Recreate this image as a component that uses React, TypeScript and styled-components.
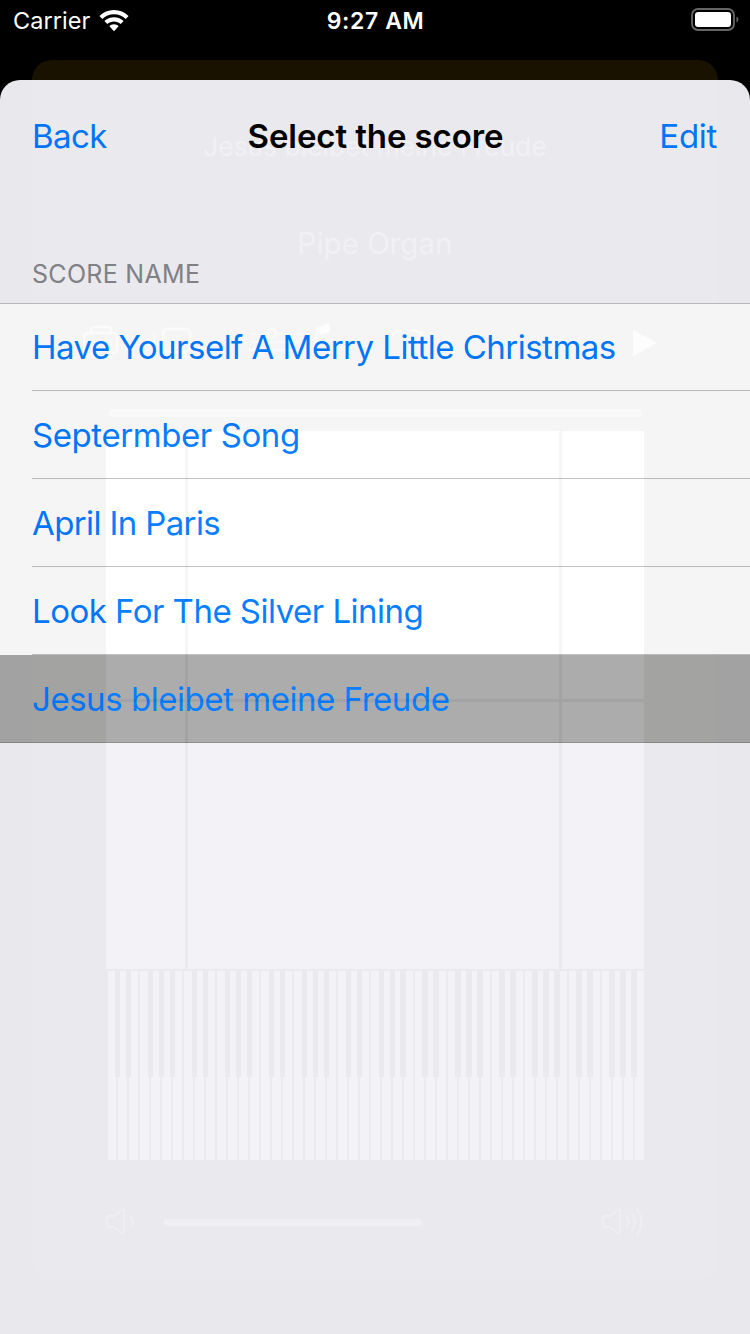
import React from "react";
import styled, { createGlobalStyle } from "styled-components";

const GlobalStyle = createGlobalStyle`
  * { box-sizing: border-box; }
  body {
    margin: 0;
    background: #000;
    font-family: Inter, "Liberation Sans", sans-serif;
  }
`;

const Screen = styled.div`
  position: relative;
  width: 750px;
  height: 1334px;
  overflow: hidden;
  background: #000;
  display: flex;
  flex-direction: column;
`;

const StatusBar = styled.header`
  height: 42px;
  flex: none;
  display: grid;
  grid-template-columns: 1fr auto 1fr;
  align-items: center;
  padding: 0 11px 0 13px;
  color: #fff;
  font-size: 23.5px;
  line-height: 42px;
`;

const Carrier = styled.div`
  display: flex;
  align-items: center;
  gap: 9px;
  letter-spacing: 0.05px;
`;

const Clock = styled.div`
  font-weight: 600;
  font-size: 23px;
  letter-spacing: 0.6px;
  margin-left: -1px;
`;

const BatterySlot = styled.div`
  display: flex;
  justify-content: flex-end;
  padding-bottom: 2px;
`;

/* Player card that stays visible through the sheet */
const Player = styled.section`
  isolation: isolate;
  width: 686px;
  height: 1221px;
  flex: none;
  margin: 18px auto 0;
  padding: 67px 74px 0;
  border-radius: 20px;
  background: #191200;
  color: #fff;
  display: flex;
  flex-direction: column;
`;

const PlayerTitle = styled.div<{ $gap: number; $size: number; $track: number }>`
  margin-top: ${(p) => p.$gap}px;
  height: 40px;
  line-height: 40px;
  text-align: center;
  white-space: nowrap;
  font-size: ${(p) => p.$size}px;
  letter-spacing: ${(p) => p.$track}px;
  opacity: 0.75;
`;

const Toolbar = styled.div`
  margin: 56px -23px 0;
  height: 48px;
  flex: none;
`;

const Progress = styled.div`
  margin: 42px 2px 0 3px;
  height: 8px;
  flex: none;
  border-radius: 4px;
  background: rgba(255, 255, 255, 0.45);
`;

const Roll = styled.div`
  margin-top: 14px;
  height: 538px;
  flex: none;
  display: grid;
  grid-template-columns: 78.5px 371px 82.5px;
  grid-template-rows: 268px 267px;
  gap: 3px;
  background: #2a1a22;
`;

const RollCell = styled.div`
  background: #fff;
`;

const Keyboard = styled.div`
  margin-top: 2px;
  padding-left: 1.5px;
  height: 189px;
  flex: none;
  display: flex;
`;

const Key = styled.div<{ $sharp: boolean }>`
  flex: 1;
  display: flex;
  justify-content: flex-end;
  background: #fff;
  border-right: 2px solid #444;
  &:last-child {
    border-right: 0;
  }
  &::after {
    content: "";
    width: 5.4px;
    height: 106px;
    margin-right: -3.800px;
    flex: none;
    position: relative;
    z-index: 1;
    background: ${(p) => (p.$sharp ? "#191200" : "transparent")};
  }
`;

const Volume = styled.div`
  height: 40px;
  margin-top: 42px;
  display: flex;
  align-items: center;
`;

const Track = styled.div`
  height: 7px;
  width: 259px;
  margin: 0 179px 0 28px;
  border-radius: 3px;
  background: rgba(255, 255, 255, 0.65);
`;

const Sheet = styled.main`
  position: absolute;
  inset: 80px 0 0;
  border-radius: 20px 20px 0 0;
  background: #f3f2f7;
  opacity: 0.962;
  display: flex;
  flex-direction: column;
`;

const NavBar = styled.nav`
  height: 112px;
  display: grid;
  grid-template-columns: 1fr auto 1fr;
  align-items: center;
  padding: 0 33px 0 32px;
`;

const NavButton = styled.button<{ $end?: boolean; $track: number }>`
  justify-self: ${(p) => (p.$end ? "end" : "start")};
  padding: 0;
  border: 0;
  background: none;
  color: #007aff;
  font: 400 33px/40px Inter, "Liberation Sans", sans-serif;
  letter-spacing: ${(p) => p.$track}px;
`;

const Title = styled.h1`
  margin: 0 0 0 2px;
  font-size: 33px;
  line-height: 40px;
  font-weight: 600;
  letter-spacing: -0.1px;
  color: #000;
`;

const SectionHeader = styled.h2`
  margin: 0;
  padding: 64px 32px 0;
  height: 111px;
  font-size: 25px;
  font-weight: 400;
  line-height: 36px;
  letter-spacing: 0.3px;
  color: #85858b;
`;

const List = styled.ul`
  list-style: none;
  margin: 0;
  padding: 0;
  border-top: 1px solid #bfbfc2;
  border-bottom: 1px solid #8b8b8b;
`;

const Row = styled.li<{ $selected?: boolean; $first?: boolean }>`
  height: ${(p) => (p.$first || p.$selected ? 87 : 88)}px;
  padding-left: 32px;
  background: ${(p) => (p.$selected ? "#a9a9a9" : "#fff")};
`;

const RowLabel = styled.div<{ $track: number; $line: boolean }>`
  height: 100%;
  display: flex;
  align-items: center;
  border-bottom: ${(p) => (p.$line ? "1px solid #c1c1c3" : "0")};
  color: #007aff;
  font-size: 33px;
  white-space: nowrap;
  letter-spacing: ${(p) => p.$track}px;
`;

const scores = [
  { name: "Have Yourself A Merry Little Christmas", track: -0.51 },
  { name: "Septermber Song", track: -0.42 },
  { name: "April In Paris", track: -0.62 },
  { name: "Look For The Silver Lining", track: -0.52 },
  { name: "Jesus bleibet meine Freude", track: -0.46 },
];

const isSharp = (i: number) => ![2, 6].includes(i % 7);

const Wifi = () => (
  <svg width="30" height="22" viewBox="0 0 30 22" fill="#fff">
    <path d="M15 0C9.300 0 4.200 2.300.4 6l2.900 3C6.300 6 10.400 4.200 15 4.200S23.700 6 26.700 9l2.900-3C25.800 2.300 20.700 0 15 0Z" />
    <path d="M15 7.200c-3.700 0-7.100 1.500-9.600 3.900l2.900 3c1.700-1.700 4.100-2.700 6.700-2.700s5 1 6.700 2.700l2.900-3C22.100 8.700 18.700 7.200 15 7.200Z" />
    <path d="M15 14.300c-1.800 0-3.400.7-4.600 1.900L15 21.200l4.600-5c-1.200-1.200-2.800-1.900-4.600-1.900Z" />
  </svg>
);

const Battery = () => (
  <svg width="48" height="24" viewBox="0 0 48 24">
    <rect x="1" y="1" width="42" height="21" rx="6" fill="none" stroke="#666" strokeWidth="1.800" />
    <rect x="4" y="4" width="36" height="15" rx="3.200" fill="#fff" />
    <path d="M45.500 8.500c2.400.8 2.400 5.200 0 6Z" fill="#666" />
  </svg>
);

const ToolbarIcons = () => (
  <svg width="584" height="48" viewBox="83 319 584 48" fill="none" stroke="#fff" strokeWidth="2.500" strokeOpacity=".6">
    <path d="M91 332v-2q0-3 3-3h14q3 0 3 3v2M91 353h-3q-4 0-4-4v-11q0-5 5-5h23q5 0 5 5v11q0 4-4 4h-4M92 342h19v15H92Z" />
    <path d="M128 333q-4 9 0 17M134 337q-2 5 0 10M148 337q2 5 0 10M153 333q4 9 0 17" strokeOpacity=".4" />
    <rect x="163" y="329" width="27" height="23" rx="4" />
    <path d="M250 334h18m9 0h32M250 342h58M250 350h48" strokeOpacity=".45" />
    <circle cx="272" cy="333" r="4" strokeOpacity=".5" />
    <path d="m316 328 11-4q3-1 3 2v6l-14 4Z" fill="#fff" stroke="none" opacity=".8" />
    <path d="M316 334v19q0 5-6 5" strokeOpacity=".5" />
    <path d="M392 336q3-5 7-5 5 0 7 5M410 331q8-2 12 5M422 331v6h-6" strokeOpacity=".6" />
    <path d="M633 330v26l24-13Z" fill="#fff" stroke="none" opacity=".8" />
  </svg>
);

const SpeakerIcon = ({ waves }: { waves: number }) => (
  <svg width={waves === 1 ? 30 : 43} height="28" viewBox={waves === 1 ? "0 0 30 28" : "-1 0 43 28"} fill="none" stroke="#fff" strokeOpacity=".5" strokeWidth="2" strokeLinejoin="round" strokeLinecap="round">
    <path d="M3 8h5l8-6q2-1.500 2 1v21q0 2.500-2 1l-8-6H3q-2 0-2-2v-7q0-2 2-2Z" />
    <path d="M25 9q4 5 0 10" />
    {waves > 1 && <path d="M30 5q6 9 0 18M35 1q9 13 0 26" />}
  </svg>
);

export default function App() {
  return (
    <>
      <GlobalStyle />
      <Screen>
        <StatusBar>
          <Carrier>
            Carrier
            <Wifi />
          </Carrier>
          <Clock>9:27 AM</Clock>
          <BatterySlot>
            <Battery />
          </BatterySlot>
        </StatusBar>
        <Player>
          <PlayerTitle $gap={0} $size={26} $track={0.2}>
            Jesus bleibet meine Freude
          </PlayerTitle>
          <PlayerTitle $gap={56} $size={29.5} $track={0}>
            Pipe Organ
          </PlayerTitle>
          <Toolbar>
            <ToolbarIcons />
          </Toolbar>
          <Progress />
          <Roll>
            {Array.from({ length: 6 }, (_, i) => (
              <RollCell key={i} />
            ))}
          </Roll>
          <Keyboard>
            {Array.from({ length: 49 }, (_, i) => (
              <Key key={i} $sharp={i < 48 && isSharp(i)} />
            ))}
          </Keyboard>
          <Volume>
            <SpeakerIcon waves={1} />
            <Track />
            <SpeakerIcon waves={3} />
          </Volume>
        </Player>
        <Sheet>
          <NavBar>
            <NavButton $track={-0.6}>Back</NavButton>
            <Title>Select the score</Title>
            <NavButton $end $track={-0.3}>
              Edit
            </NavButton>
          </NavBar>
          <SectionHeader>SCORE NAME</SectionHeader>
          <List>
            {scores.map((score, i) => {
              const last = i === scores.length - 1;
              return (
                <Row key={score.name} $first={i === 0} $selected={last}>
                  <RowLabel $track={score.track} $line={!last}>
                    {score.name}
                  </RowLabel>
                </Row>
              );
            })}
          </List>
        </Sheet>
      </Screen>
    </>
  );
}
